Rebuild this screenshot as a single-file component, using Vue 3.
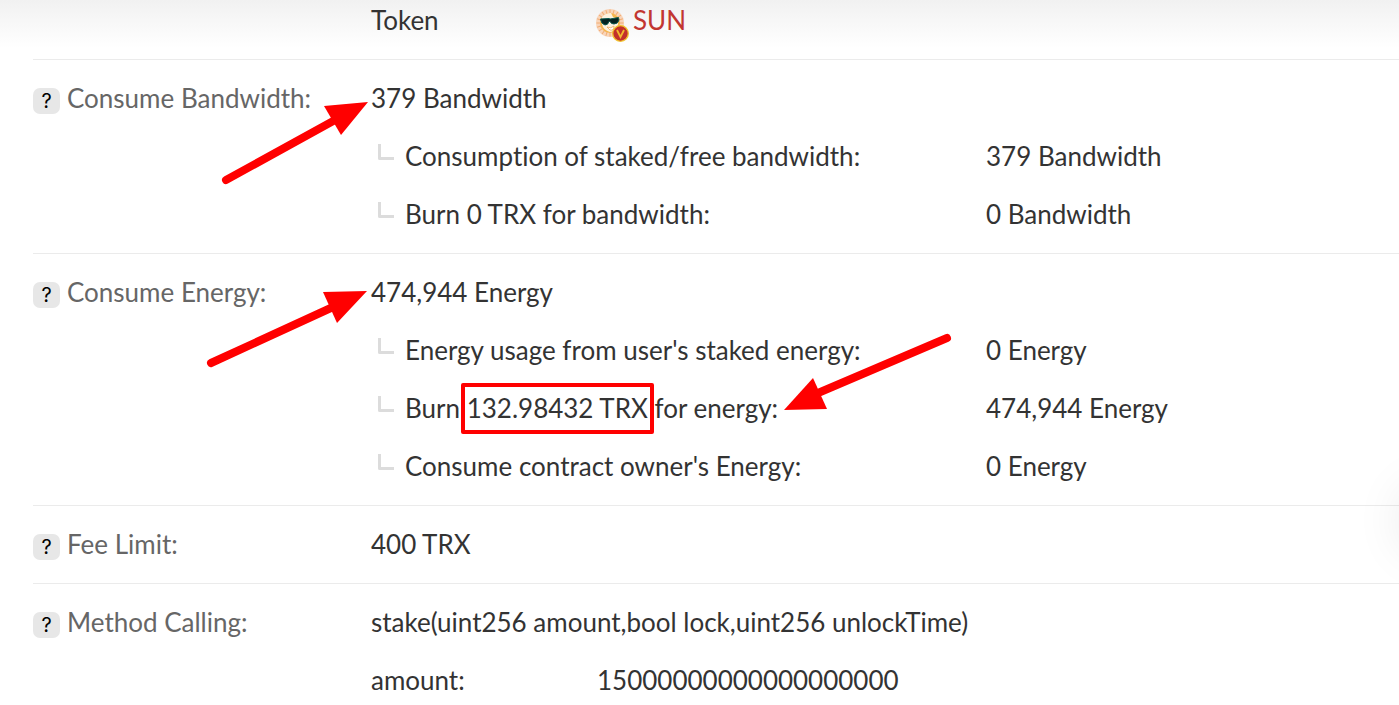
<script setup>
const sections = [
  {
    label: 'Consume Bandwidth:',
    value: '379 Bandwidth',
    details: [
      { before: 'Consumption of staked/free bandwidth:', value: '379 Bandwidth' },
      { before: 'Burn 0 TRX for bandwidth:', value: '0 Bandwidth' },
    ],
  },
  {
    label: 'Consume Energy:',
    value: '474,944 Energy',
    details: [
      { before: "Energy usage from user's staked energy:", value: '0 Energy' },
      { before: 'Burn ', boxed: '132.98432 TRX', after: ' for energy:', value: '474,944 Energy' },
      { before: "Consume contract owner's Energy:", value: '0 Energy' },
    ],
  },
  { label: 'Fee Limit:', value: '400 TRX' },
  {
    label: 'Method Calling:',
    value: 'stake(uint256 amount,bool lock,uint256 unlockTime)',
    params: [{ name: 'amount:', value: '15000000000000000000' }],
  },
]
const rays = Array.from({ length: 20 }, (_, i) => i * 18)
</script>

<template>
  <main class="page">
    <section class="section token">
      <div class="content">
        <div class="param">
          <span>Token</span>
          <a class="token-link" href="#sun">
            <svg class="sun" viewBox="0 0 34 34" aria-hidden="true">
              <circle cx="14" cy="15" r="14" fill="#f8d5ba" />
              <g stroke="#f2ac72" stroke-width="1">
                <path v-for="r in rays" :key="r" d="M14 1.5V6" :transform="`rotate(${r} 14 15)`" />
              </g>
              <circle cx="14" cy="15" r="10" fill="#f5b64e" />
              <path d="M6 9Q9 5 15 5L17 9L22 11L22 17Q20 24 14 24Q7 22 6 16Z" fill="#fdf2df" />
              <path d="M4.500 11L13 10.500L14 11L22.500 9.500L23 12Q22 16 18 16Q15 16 14 13.500L13 13.500Q12 17 9 17Q5 16 4.500 11Z" fill="#04221f" stroke="#0b5a50" stroke-width="1" />
              <path d="M11 19Q15 21 18 18Q18 23 14 22Z" fill="#fff" stroke="#eaa34c" stroke-width=".7" />
              <circle cx="24.500" cy="25.500" r="7.800" fill="#c2302c" stroke="#f1c32d" stroke-width="1.300" />
              <path d="M21 22L24.500 29L28 22" fill="none" stroke="#f1b82d" stroke-width="1.800" />
            </svg>
            <span>SUN</span>
          </a>
        </div>
      </div>
    </section>

    <section v-for="s in sections" :key="s.label" class="section">
      <h2 class="label">
        <button class="help" type="button" :aria-label="`About ${s.label}`">?</button>
        <span>{{ s.label }}</span>
      </h2>
      <div class="content">
        <div class="line">{{ s.value }}</div>
        <div v-for="d in s.details" :key="d.before" class="detail">
          <i class="branch"></i>
          <span class="name">{{ d.before }}<mark v-if="d.boxed" class="boxed">{{ d.boxed }}</mark>{{ d.after }}</span>
          <span>{{ d.value }}</span>
        </div>
        <div v-for="p in s.params" :key="p.name" class="param">
          <span>{{ p.name }}</span>
          <span>{{ p.value }}</span>
        </div>
      </div>
    </section>

    <svg class="arrows" width="960" height="380" viewBox="0 0 960 380" aria-hidden="true">
      <g stroke="#f00" stroke-width="8" stroke-linecap="round">
        <path d="M226 180L335 120" />
        <path d="M211 363L333 307" />
        <path d="M947 338L818 393" />
      </g>
      <g fill="#f00">
        <path d="M368 102L324 106L341 135Z" />
        <path d="M367 291L323 292L337 323Z" />
        <path d="M784 410L813 378L827 409Z" />
      </g>
    </svg>
    <div class="edge-shadow"></div>
  </main>
</template>

<style>
body {
  background: #fff;
}
</style>

<style scoped>
.page {
  position: relative;
  min-height: 100vh;
  box-sizing: border-box;
  padding-left: 33px;
  overflow: hidden;
  background: linear-gradient(#f1f1f1, #fff 48px);
  color: #333;
  font: 26px/40px Lato, "Liberation Sans", sans-serif;
  font-variant-ligatures: none;
  white-space: nowrap;
}
.section {
  display: grid;
  grid-template-columns: 338px 1fr;
  padding: 9px 0 10px;
  border-bottom: 1px solid #ebebeb;
}
.section:last-of-type {
  border-bottom: 0;
}
.token {
  padding-top: 0;
}
.token .content {
  grid-column: 2;
}
.token .param {
  padding-top: 0;
}
.label {
  display: flex;
  align-items: center;
  align-self: start;
  gap: 7px;
  margin: 0;
  padding: 9px 0;
  color: #666;
  font: inherit;
}
.help {
  width: 27px;
  height: 26px;
  margin-top: 6px;
  padding: 0;
  border: 0;
  border-radius: 7px;
  background: #e7e7e7;
  color: #000;
  font: 400 20px/26px Inter, sans-serif;
  text-align: center;
}
.line,
.detail,
.param {
  padding: 9px 0;
}
.detail {
  display: grid;
  grid-template-columns: 34px 581px 1fr;
}
.branch {
  box-sizing: border-box;
  width: 16px;
  height: 16px;
  margin: 8px 0 0 7px;
  border: solid #dcdcdc;
  border-width: 0 0 3px 3px;
  border-radius: 0 0 0 2px;
}
.boxed {
  position: relative;
  background: none;
  color: inherit;
}
.boxed::after {
  content: "";
  position: absolute;
  inset: -9px -6px -10px;
  border: 4px solid #f00;
  border-radius: 2px;
}
.param {
  display: grid;
  grid-template-columns: 226px 1fr;
}
.token-link {
  display: flex;
  gap: 3px;
  color: #c23631;
  text-decoration: none;
}
.sun {
  width: 34px;
  height: 34px;
  margin: 8px 0 -2px -1px;
}
.arrows {
  position: absolute;
  top: 0;
  left: 0;
  overflow: visible;
  pointer-events: none;
}
.edge-shadow {
  position: absolute;
  top: 495px;
  right: -70px;
  width: 60px;
  height: 50px;
  border-radius: 25px;
  box-shadow: 0 0 50px 8px rgba(0, 0, 0, 0.1);
}
</style>
